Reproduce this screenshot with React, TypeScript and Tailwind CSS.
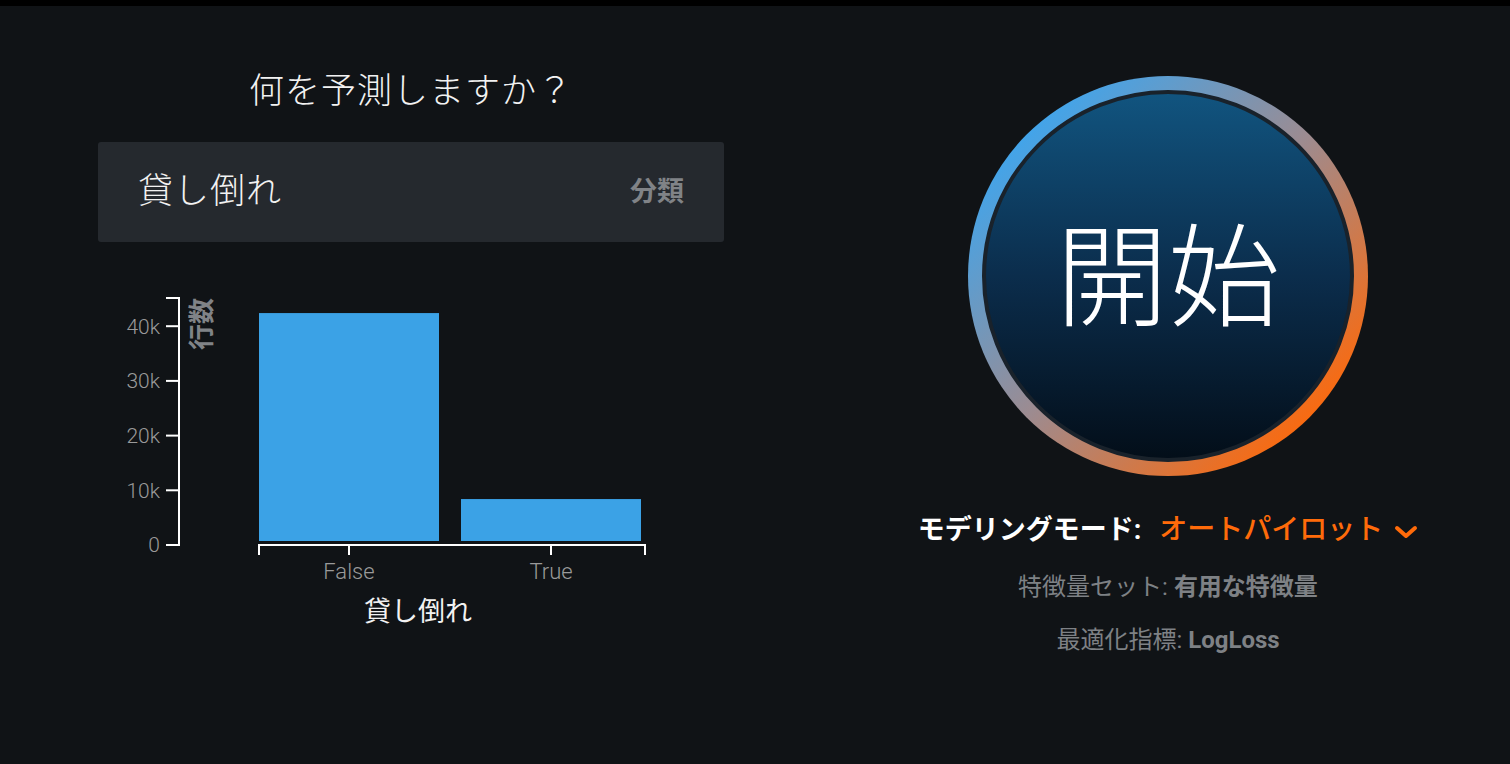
import React from "react";

const FONT = "font-['Roboto','Noto_Sans_CJK_JP',sans-serif]";

// Y axis scale: 0 at y=265, 54.7px per 10k
const yOf = (v: number) => 265 - (v / 10000) * 54.7;

const yTicks = [0, 10000, 20000, 30000, 40000];

const bars = [
  { label: "False", value: 42400, x: 161, center: 251 },
  { label: "True", value: 8400, x: 363, center: 453 },
];

const TargetChart: React.FC = () => {
  return (
    <svg width={626} height={360} className="block">
      {/* bars */}
      {bars.map((b) => (
        <rect
          key={b.label}
          x={b.x}
          y={yOf(b.value)}
          width={180}
          height={261 - yOf(b.value)}
          fill="#3ba2e6"
        />
      ))}

      {/* y axis */}
      <path d="M68 18 H81 V265 H68" fill="none" stroke="#ffffff" strokeWidth={2} />
      {yTicks.map((t) => (
        <g key={t}>
          <line x1={68} x2={81} y1={yOf(t)} y2={yOf(t)} stroke="#ffffff" strokeWidth={2} />
          <text
            x={62}
            y={yOf(t)}
            dy="0.35em"
            textAnchor="end"
            fill="#9a9a9a"
            fontSize={21}
            fontWeight={300}
            fontFamily="Roboto, 'Noto Sans CJK JP', sans-serif"
          >
            {t === 0 ? "0" : `${t / 1000}k`}
          </text>
        </g>
      ))}
      <text
        transform="translate(104 18) rotate(-90)"
        dy="0.36em"
        textAnchor="end"
        fill="#808387"
        fontSize={26}
        fontWeight={700}
        fontFamily="'Noto Sans CJK JP', sans-serif"
      >
        行数
      </text>

      {/* x axis */}
      <path d="M161 275 V265 H547 V275" fill="none" stroke="#ffffff" strokeWidth={2} />
      {bars.map((b) => (
        <g key={b.label}>
          <line x1={b.center} x2={b.center} y1={265} y2={275} stroke="#ffffff" strokeWidth={2} />
          <text
            x={b.center}
            y={291}
            dy="0.35em"
            textAnchor="middle"
            fill="#9a9a9a"
            fontSize={22}
            fontWeight={300}
            fontFamily="Roboto, 'Noto Sans CJK JP', sans-serif"
          >
            {b.label}
          </text>
        </g>
      ))}
      <text
        x={320}
        y={332}
        dy="0.35em"
        textAnchor="middle"
        fill="#f2f2f2"
        fontSize={27}
        fontWeight={400}
        fontFamily="'Noto Sans CJK JP', sans-serif"
      >
        貸し倒れ
      </text>
    </svg>
  );
};

export default function App() {
  return (
    <div className={`${FONT} min-h-[764px] bg-[#101316] border-t-[6px] border-black`}>
      <div className="flex pl-[98px]">
        {/* left: target */}
        <div className="w-[626px] flex flex-col items-center pt-[66px]">
          <h1 className="text-[35px] leading-[40px] font-light text-[#f2f2f2] tracking-[1px]">
            何を予測しますか？
          </h1>
          <div className="mt-[30px] w-full h-[100px] rounded-[3px] bg-[#25292e] flex items-center justify-between pl-[40px] pr-[40px]">
            <span className="text-[35px] font-light text-[#f2f2f2] tracking-[1px]">貸し倒れ</span>
            <span className="text-[27px] font-bold text-[#808387]">分類</span>
          </div>
          <div className="mt-[38px]">
            <TargetChart />
          </div>
        </div>

        {/* right: start */}
        <div className="ml-[144px] w-[600px] flex flex-col items-center pt-[70px]">
          <button className="w-[400px] h-[400px] rounded-full p-[14px] bg-[linear-gradient(135deg,#3ca6f0_12%,#9d8b90_50%,#ff6808_88%)]">
            <div className="w-full h-full rounded-full border-[4px] border-[#19222b] bg-[linear-gradient(180deg,#11547f_0%,#0b2d4c_50%,#030e19_100%)] flex items-center justify-center">
              <span className="text-[112px] leading-none font-light text-white -mt-[14px] font-['Noto_Sans_CJK_JP',sans-serif]">
                開始
              </span>
            </div>
          </button>

          <div className="mt-[36px] flex items-center leading-[36px]">
            <span className="text-[27px] font-bold text-white">モデリングモード:</span>
            <span className="ml-[18px] text-[28px] font-medium text-[#ff6b0a]">オートパイロット</span>
            <svg width="24" height="16" viewBox="0 0 24 16" className="ml-[11px] mt-[4px]">
              <polyline points="3,4 12,12 21,4" fill="none" stroke="#ff6b0a" strokeWidth={4} strokeLinecap="round" strokeLinejoin="round" />
            </svg>
          </div>

          <div className="mt-[21px] text-[24px] leading-[36px] text-[#7e8185]">
            特徴量セット: <span className="font-bold">有用な特徴量</span>
          </div>
          <div className="mt-[17px] text-[24px] leading-[36px] text-[#7e8185]">
            最適化指標: <span className="font-bold">LogLoss</span>
          </div>
        </div>
      </div>
    </div>
  );
}
